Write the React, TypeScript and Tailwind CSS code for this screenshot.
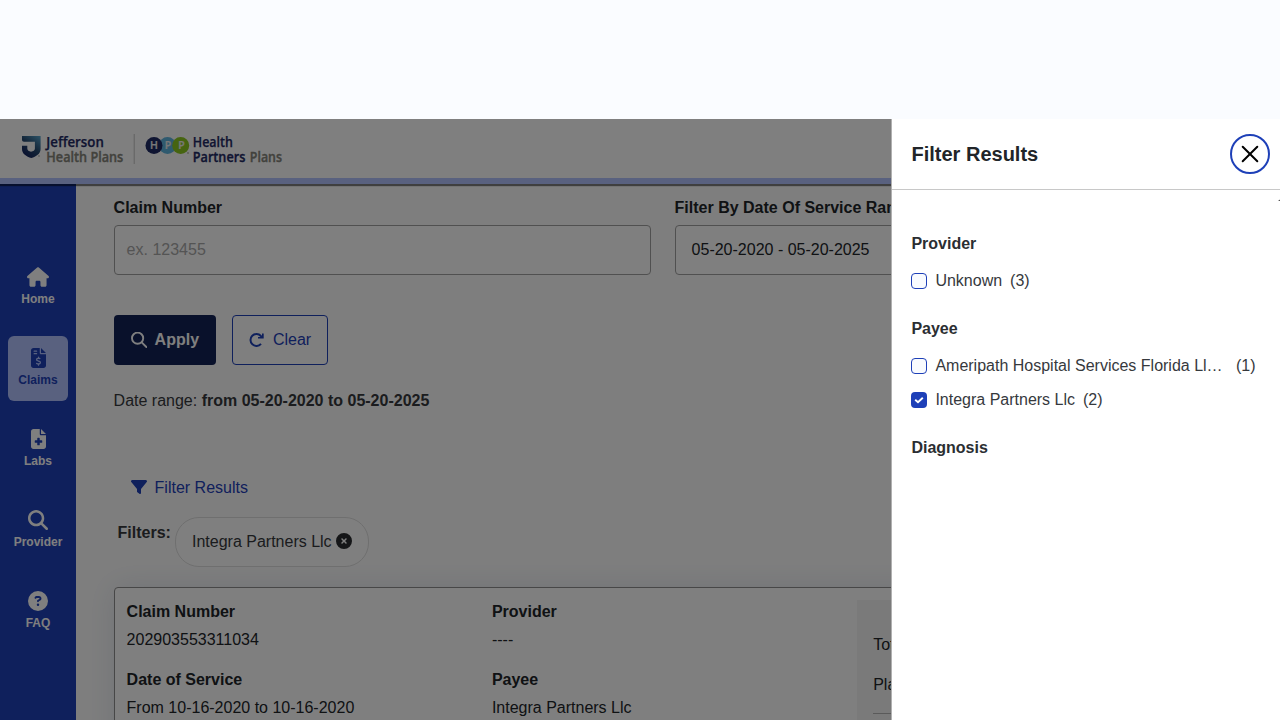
import React from "react";
import {
  FaHouse,
  FaFileInvoiceDollar,
  FaFileMedical,
  FaMagnifyingGlass,
  FaCircleQuestion,
  FaFilter,
  FaCircleXmark,
} from "react-icons/fa6";

function Logo() {
  return (
    <svg width="300" height="59" viewBox="0 119 300 59" fontFamily="'Open Sans', 'Noto Sans', sans-serif" fontSize="13.500">
      <defs>
        <linearGradient id="shield" x1="1" y1="0" x2="0.3" y2="1">
          <stop offset="0" stopColor="#5aa7cf" />
          <stop offset="0.55" stopColor="#26496f" />
          <stop offset="1" stopColor="#14235f" />
        </linearGradient>
      </defs>
      <path
        d="M22 136H40.600V149C40.600 154 36 156.500 31.300 158C26.500 156.500 22 154 22 149V145.700H27.300V148.500C27.300 150.300 29 151.300 31 151.800C33.300 151.300 34.900 150.300 34.900 148.500V141.800H24C22.800 141.800 22 141 22 139.800Z"
        fill="url(#shield)"
      />
      <circle cx="39" cy="156" r="0.700" fill="#8d8d83" />
      <g fontWeight="600">
        <text x="46.300" y="146.700" textLength="57.500" lengthAdjust="spacingAndGlyphs" fill="#1f2a64" stroke="#1f2a64" strokeWidth="0.250">Jefferson</text>
        <text x="46.300" y="162" textLength="77" lengthAdjust="spacingAndGlyphs" fill="#84847a" stroke="#84847a" strokeWidth="0.350">Health Plans</text>
        <text x="192.800" y="146.700" textLength="40" lengthAdjust="spacingAndGlyphs" fill="#1f2a64" stroke="#1f2a64" strokeWidth="0.250">Health</text>
        <text x="192.800" y="162" textLength="52.500" lengthAdjust="spacingAndGlyphs" fill="#1f2a64" stroke="#1f2a64" strokeWidth="0.350">Partners</text>
        <text x="249.800" y="162" textLength="32.200" lengthAdjust="spacingAndGlyphs" fill="#84847a" stroke="#84847a" strokeWidth="0.350">Plans</text>
      </g>
      <rect x="133.700" y="134" width="1" height="30" fill="#c4c4c4" />
      <circle cx="167.500" cy="145.500" r="8.500" fill="#5fb4de" />
      <circle cx="154" cy="145.500" r="8.500" fill="#1f2a64" />
      <circle cx="180.700" cy="145.500" r="8.500" fill="#8cc820" />
      <circle cx="188" cy="153" r="0.800" fill="#8d8d83" />
      <g fill="#f0f0f0" stroke="#f0f0f0" strokeWidth="0.200" fontSize="10.500" fontWeight="600" textAnchor="middle">
        <text x="154" y="149.300">H</text>
        <text x="168" y="149.300">P</text>
        <text x="181.500" y="149.300">P</text>
      </g>
    </svg>
  );
}

function NavItem({ icon, label, active }: { icon: React.ReactNode; label: string; active?: boolean }) {
  return (
    <div
      className={
        active
          ? "flex h-[65px] w-[60px] flex-col items-center rounded-md bg-[#b2c3ff] pt-3 text-[#1e40b8]"
          : "flex h-[65px] w-[76px] flex-col items-center pt-3 text-white"
      }
    >
      {icon}
      <span className="mt-1 text-xs leading-4 font-bold">{label}</span>
    </div>
  );
}

function Pair({ label, value }: { label: string; value: string }) {
  return (
    <div className="h-[68px] leading-6">
      <div className="font-bold">{label}</div>
      <div className="mt-1">{value}</div>
    </div>
  );
}

function Option({ label, count, checked }: { label: string; count: number; checked?: boolean }) {
  return (
    <div className="flex h-6 items-center text-[#36393d]">
      <span
        className={
          checked
            ? "flex size-4 items-center justify-center rounded-[4px] bg-[#1e40b8]"
            : "size-4 rounded-[4px] border border-[#1e40b8] bg-[#f9fbfe]"
        }
      >
        {checked && (
          <svg width="10" height="10" viewBox="0 0 10 10" fill="none" stroke="#fff" strokeWidth="1.900">
            <path d="M1.200 4.800L4 7.300L8.800 2.800" />
          </svg>
        )}
      </span>
      <span className="ml-2 whitespace-nowrap">{label}</span>
      <span className={label.endsWith("…") ? "ml-[13.300px]" : "ml-2"}>({count})</span>
    </div>
  );
}

export default function App() {
  return (
    <div className="relative flex h-[720px] w-[1280px] flex-col overflow-hidden bg-[#fafcff] pt-[119px] font-['Liberation_Sans',sans-serif] text-base text-[#212529]">
      <header className="z-10 h-[65px] shrink-0 border-b-[6px] border-[#b2c3ff] bg-white shadow-[0_2px_1px_rgba(0,0,0,0.5)]">
        <Logo />
      </header>
      <div className="flex min-h-0 flex-1">
        <nav className="flex w-[76px] shrink-0 flex-col items-center gap-4 bg-[#1e40b8] pt-[71px]">
          <NavItem icon={<FaHouse className="h-5 w-[22px]" />} label="Home" />
          <NavItem active icon={<FaFileInvoiceDollar viewBox="0 0 384 512" className="ml-px h-5 w-[15px]" />} label="Claims" />
          <NavItem icon={<FaFileMedical viewBox="0 0 384 512" className="ml-px h-5 w-[15px]" />} label="Labs" />
          <NavItem icon={<FaMagnifyingGlass className="size-5" />} label="Provider" />
          <NavItem icon={<FaCircleQuestion className="size-5" />} label="FAQ" />
        </nav>
        <main className="min-w-0 flex-1 overflow-hidden bg-[#fdfdfd] pt-3 pl-[37.600px]">
          <div className="flex w-[1098px] gap-6">
            <div className="w-[537px]">
              <div className="leading-6 font-bold">Claim Number</div>
              <div className="mt-[5px] flex h-[50px] items-center rounded border border-[#a0a0a0] bg-white pl-3 text-[#a8a8a8]">
                ex. 123455
              </div>
            </div>
            <div className="w-[537px]">
              <div className="leading-6 font-bold">Filter By Date Of Service Range</div>
              <div className="mt-[5px] flex h-[50px] items-center rounded border border-[#a0a0a0] bg-white pl-4">
                05-20-2020 - 05-20-2025
              </div>
            </div>
          </div>
          <div className="mt-10 flex gap-4">
            <button className="flex h-[50px] w-[102px] items-center rounded bg-[#122256] pl-[17px] font-bold text-white">
              <svg className="mr-2" width="16" height="16" viewBox="0 0 16 16" fill="none" stroke="currentColor" strokeWidth="1.900">
                <circle cx="6.600" cy="6.200" r="5.600" />
                <path d="M10.700 10.300L15.400 15" strokeLinecap="round" />
              </svg>
              Apply
            </button>
            <button className="flex h-[50px] w-24 items-center rounded border border-[#1e40b8] bg-white pl-[15.900px] text-[#1e40b8]">
              <svg className="mr-[8.400px]" width="16" height="16" viewBox="0 0 16 16" fill="none" stroke="currentColor" strokeWidth="2">
                <path d="M13 11.900A6 5.900 0 1 1 12.900 4L14.300 5.300" />
                <path d="M15.700 1.400V6.600H10V5.100H13L14 4.200V1.400Z" fill="currentColor" stroke="none" />
              </svg>
              Clear
            </button>
          </div>
          <div className="mt-6 leading-6 text-[#36393d]">
            Date range: <b>from 05-20-2020 to 05-20-2025</b>
          </div>
          <div className="mt-[63px] flex h-6 items-center pl-[17px] text-[#1e40b8]">
            <FaFilter className="mr-2 mb-0.5 size-4" />
            Filter Results
          </div>
          <div className="mt-[17px] flex pl-1">
            <div className="mt-1 w-[57.400px] leading-6 font-bold text-[#36393d]">Filters:</div>
            <div className="flex h-[50px] w-[194px] items-center rounded-[24px] border border-[#dedede] bg-white pl-4 text-[#36393d]">
              Integra Partners Llc
              <FaCircleXmark className="mb-0.5 ml-1 size-4 text-[#2b2d30]" />
            </div>
          </div>
          <div className="mt-5 flex h-[200px] w-[1098px] rounded border border-[#8e8e8e] bg-white pt-3 pl-3 shadow-[0_0_30px_rgba(30,64,120,0.12)]">
            <div className="w-[365.300px]">
              <Pair label="Claim Number" value="202903553311034" />
              <Pair label="Date of Service" value="From 10-16-2020 to 10-16-2020" />
            </div>
            <div className="w-[365.300px]">
              <Pair label="Provider" value="----" />
              <Pair label="Payee" value="Integra Partners Llc" />
            </div>
            <div className="w-[340px] bg-[#f5f5f5] px-4 pt-[33px] leading-6">
              <div className="h-10">Total Billed</div>
              <div className="h-[41px] border-b border-[#b5b5b5]">Plan Paid</div>
            </div>
          </div>
        </main>
      </div>

      <div className="absolute inset-x-0 top-[119px] bottom-0 z-20 bg-black/50" />

      <aside className="absolute top-[119px] right-0 bottom-0 z-30 w-[389px] border-l border-[#b0b0b0] bg-white">
        <div className="flex h-[71px] items-center justify-between border-b border-[#c8c8c8] pr-[9.600px] pl-[19.500px]">
          <h2 className="text-xl font-bold">Filter Results</h2>
          <button className="text-black">
            <svg width="40" height="40" viewBox="0 0 40 40" fill="none">
              <circle cx="20" cy="20" r="19" stroke="#1e40b8" strokeWidth="2" />
              <path d="M12.700 12.700L27.300 27.300M27.300 12.700L12.700 27.300" stroke="currentColor" strokeWidth="2" strokeLinecap="round" />
            </svg>
          </button>
        </div>
        <div className="flex">
          <div className="flex-1 pt-[42px] pl-[19.400px] leading-6">
            <h3 className="font-bold text-[#2b2e32]">Provider</h3>
            <div className="mt-[13px]">
              <Option label="Unknown" count={3} />
            </div>
            <h3 className="mt-6 font-bold text-[#2b2e32]">Payee</h3>
            <div className="mt-[13px] flex flex-col gap-[10px]">
              <Option label="Ameripath Hospital Services Florida Ll…" count={1} />
              <Option label="Integra Partners Llc" count={2} checked />
            </div>
            <h3 className="mt-6 font-bold text-[#2b2e32]">Diagnosis</h3>
          </div>
          <div className="mt-[8px] h-[3px] w-[2px] overflow-hidden">
            <svg width="8" height="3" viewBox="0 0 8 3">
              <path d="M0 3L4 0L8 3Z" fill="#505050" />
            </svg>
          </div>
        </div>
      </aside>
    </div>
  );
}
